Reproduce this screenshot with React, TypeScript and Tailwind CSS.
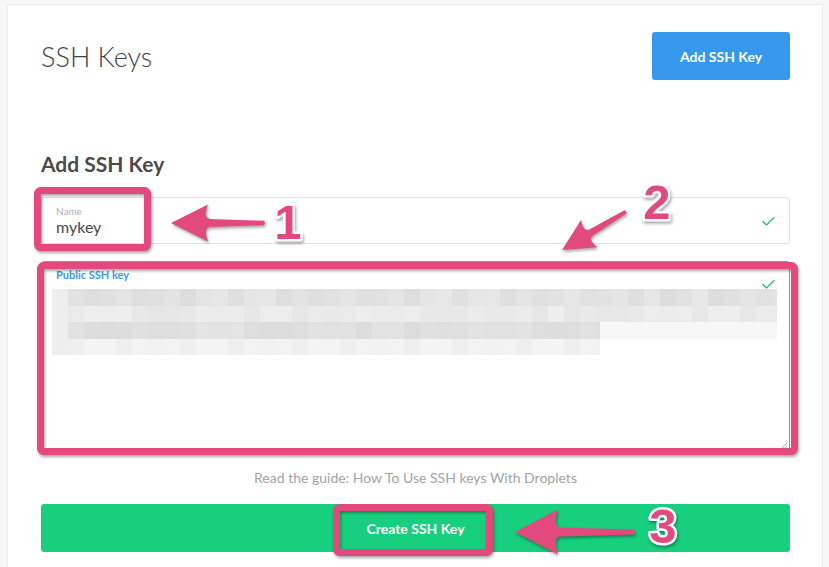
import React from "react";

const PINK = "#e24a7e";

const blurRows = [
  { w: 725, base: 226, spread: 5, tail: 0 },
  { w: 725, base: 234, spread: 4, tail: 0 },
  { w: 548, base: 224, spread: 4, tail: 247 },
  { w: 548, base: 241, spread: 3, tail: 0 },
];

function shade(row: number, i: number, base: number, spread: number) {
  const v = base + ((i * 37 + row * 11 + ((i * i) % 7)) % (spread * 2 + 1)) - spread;
  return `rgb(${v},${v},${v})`;
}

function BlurredKey() {
  return (
    <div className="flex w-[725px] flex-col overflow-hidden">
      {blurRows.map((row, r) => (
        <div key={r} className="flex h-[16.5px]">
          <div className="flex h-full shrink-0 overflow-hidden" style={{ width: row.w }}>
            {Array.from({ length: Math.ceil(row.w / 16) }).map((_, i) => (
              <div
                key={i}
                className="h-full w-4 shrink-0"
                style={{
                  backgroundColor:
                    i === 0 ? "rgb(238,238,238)" : shade(r, i, row.base, row.spread),
                }}
              />
            ))}
          </div>
          {row.tail > 0 && (
            <div
              className="h-full flex-1"
              style={{ backgroundColor: `rgb(${row.tail},${row.tail},${row.tail})` }}
            />
          )}
        </div>
      ))}
    </div>
  );
}

function Check() {
  return (
    <svg width="13" height="10" viewBox="0 0 13 10" fill="none">
      <path d="M1 5.5 L4.5 9 L12 1.5" stroke="#22c47a" strokeWidth="1.3" strokeLinecap="round" strokeLinejoin="round" />
    </svg>
  );
}

// left-pointing arrow, tip at origin, tail at (len, 0)
function arrowPath(len: number, head: number, half: number, s1: number, s2: number) {
  return `M0,0 L${head},${-half} Q${head - 5},${-s1 - 1} ${head + 2},${-s1} L${len},${-s2} Q${len + 2},0 ${len},${s2} L${head + 2},${s1} Q${head - 5},${s1 + 1} ${head},${half} Z`;
}

function Overlay() {
  const num = {
    fontFamily: "'Liberation Sans', Arial, sans-serif",
    fontWeight: 700,
    fontSize: 49,
    fill: PINK,
    stroke: "#fff",
    strokeWidth: 5,
    paintOrder: "stroke" as const,
    strokeLinejoin: "round" as const,
    textAnchor: "middle" as const,
  };
  return (
    <svg
      className="pointer-events-none absolute top-0 left-0 drop-shadow-[1px_2px_1.5px_rgba(0,0,0,0.35)]"
      width="829"
      height="567"
      viewBox="0 0 829 567"
    >
      <rect x="37.5" y="190.5" width="110" height="57" rx="3" fill="none" stroke={PINK} strokeWidth="7" />
      <rect x="40.5" y="265.5" width="754" height="186" rx="3" fill="none" stroke={PINK} strokeWidth="7" />
      <rect x="336.5" y="507.5" width="153" height="45" rx="3" fill="none" stroke={PINK} strokeWidth="7" />

      <path transform="translate(171 223)" d={arrowPath(93, 37, 18.5, 4, 2.2)} fill={PINK} />
      <path transform="translate(562 250) rotate(-31)" d={arrowPath(74, 32, 16, 3.5, 2)} fill={PINK} />
      <path transform="translate(515 532)" d={arrowPath(119, 43, 22.5, 4.5, 2.4)} fill={PINK} />

      <text x="288" y="239" style={num}>1</text>
      <text x="657" y="219" style={num}>2</text>
      <text x="663" y="543" style={num}>3</text>
    </svg>
  );
}

export default function App() {
  return (
    <div
      className="relative h-[567px] w-[829px] overflow-hidden bg-[#f7f7f7] pt-1 pl-[7px]"
      style={{ fontFamily: "Lato, 'Open Sans', sans-serif" }}
    >
      <div className="w-[816px] border border-[#ececec] bg-white px-8 pt-[27px] pl-[33px] pb-10">
        <div className="flex items-center justify-between">
          <h1 className="text-[27px] font-light leading-none text-[#444]">SSH Keys</h1>
          <button className="h-12 w-[138px] rounded-[3px] bg-[#3598ea] text-[14px] font-bold text-white">
            Add SSH Key
          </button>
        </div>

        <h2 className="mt-[72px] text-[21px] font-bold leading-6 text-[#4a4a4a]">Add SSH Key</h2>

        <div className="mt-[21px] flex h-[47px] items-center justify-between rounded-[3px] border border-[#e3e3e3] px-[14px]">
          <div className="flex flex-col">
            <span className="text-[10px] leading-3 text-[#b0b0b0]">Name</span>
            <span className="text-[16px] leading-5 text-[#4a4a4a]">mykey</span>
          </div>
          <Check />
        </div>

        <div className="relative mt-[17px] h-[191px] rounded-[3px] border border-[#5aa5dc] pt-[6px] pl-[10px]">
          <span className="block pl-[4px] text-[11px] font-bold leading-[14px] text-[#3d9ae2]">
            Public SSH key
          </span>
          <div className="absolute top-[17px] right-[14px]">
            <Check />
          </div>
          <div className="mt-[7px]">
            <BlurredKey />
          </div>
          <svg className="absolute right-[1px] bottom-[1px]" width="8" height="8" viewBox="0 0 8 8">
            <path d="M7 1 L1 7 M7 4 L4 7" stroke="#9a9a9a" strokeWidth="0.8" />
          </svg>
        </div>

        <p className="mt-[16px] text-center text-[14px] leading-5 text-[#a3a3a3]">
          Read the guide: How To Use SSH keys With Droplets
        </p>

        <button className="mt-[16px] h-12 w-full rounded-[3px] bg-[#17cf7e] text-[14px] font-bold text-white">
          Create SSH Key
        </button>
      </div>
      <Overlay />
    </div>
  );
}
